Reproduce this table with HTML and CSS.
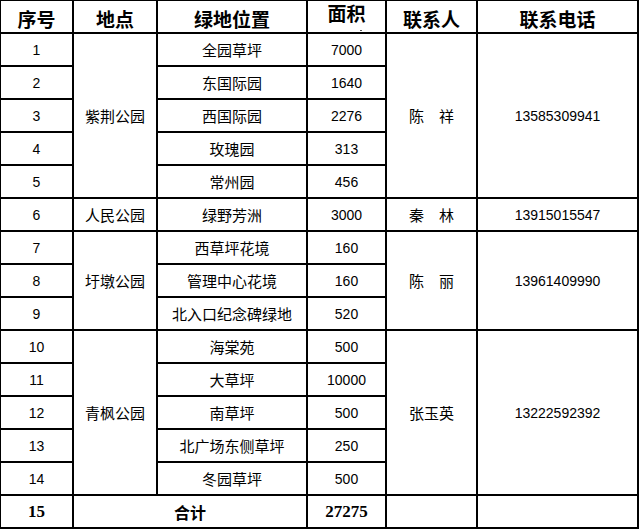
FILE: index.html
```html
<!DOCTYPE html>
<html lang="zh">
<head>
<meta charset="utf-8">
<title>绿地联系表</title>
<link rel="stylesheet" href="styles.css">
</head>
<body>
<table class="sheet">
  <colgroup>
    <col class="c1"><col class="c2"><col class="c3"><col class="c4"><col class="c5"><col class="c6">
  </colgroup>
  <thead>
    <tr class="head">
      <th>序号</th><th>地点</th><th>绿地位置</th><th class="area-h"><span class="area-t">面积</span><span class="dot"></span></th><th>联系人</th><th>联系电话</th>
    </tr>
  </thead>
  <tbody>
    <tr><td class="num">1</td><td rowspan="5">紫荆公园</td><td>全园草坪</td><td class="num">7000</td><td rowspan="5">陈　祥</td><td rowspan="5" class="num">13585309941</td></tr>
    <tr><td class="num">2</td><td>东国际园</td><td class="num">1640</td></tr>
    <tr><td class="num">3</td><td>西国际园</td><td class="num">2276</td></tr>
    <tr><td class="num">4</td><td>玫瑰园</td><td class="num">313</td></tr>
    <tr><td class="num">5</td><td>常州园</td><td class="num">456</td></tr>
    <tr><td class="num">6</td><td>人民公园</td><td>绿野芳洲</td><td class="num">3000</td><td>秦　林</td><td class="num">13915015547</td></tr>
    <tr><td class="num">7</td><td rowspan="3">圩墩公园</td><td>西草坪花境</td><td class="num">160</td><td rowspan="3">陈　丽</td><td rowspan="3" class="num">13961409990</td></tr>
    <tr><td class="num">8</td><td>管理中心花境</td><td class="num">160</td></tr>
    <tr><td class="num">9</td><td>北入口纪念碑绿地</td><td class="num">520</td></tr>
    <tr><td class="num">10</td><td rowspan="5">青枫公园</td><td>海棠苑</td><td class="num">500</td><td rowspan="5">张玉英</td><td rowspan="5" class="num">13222592392</td></tr>
    <tr><td class="num">11</td><td>大草坪</td><td class="num">10000</td></tr>
    <tr><td class="num">12</td><td>南草坪</td><td class="num">500</td></tr>
    <tr><td class="num">13</td><td>北广场东侧草坪</td><td class="num">250</td></tr>
    <tr><td class="num">14</td><td>冬园草坪</td><td class="num">500</td></tr>
    <tr class="total"><td class="tnum">15</td><td colspan="2" class="tlabel">合计</td><td class="tnum">27275</td><td></td><td></td></tr>
  </tbody>
</table>
</body>
</html>
```

FILE: styles.css
```css
html, body {
  margin: 0;
  padding: 0;
  background: #fff;
  overflow: hidden;
}

.sheet {
  border-collapse: collapse;
  table-layout: fixed;
  width: 640px;
  margin: -1px 0 0 -1px;
  font-family: "Noto Sans CJK SC", sans-serif;
  font-size: 15px;
  color: #000;
}

.c1 { width: 73px; }
.c2 { width: 84px; }
.c3 { width: 150px; }
.c4 { width: 79px; }
.c5 { width: 91px; }
.c6 { width: 161px; }

.sheet th,
.sheet td {
  border: 2px solid #000;
  padding: 0;
  text-align: center;
  vertical-align: middle;
  line-height: 1;
  white-space: nowrap;
}

.sheet tr {
  height: 33px;
}

.head th {
  font-size: 19px;
  font-weight: 700;
  padding-top: 3px;
}

.area-h {
  position: relative;
}

.area-t {
  position: relative;
  top: -6px;
}

.dot {
  position: absolute;
  left: 52px;
  bottom: 1px;
  width: 2px;
  height: 1px;
  background: #555;
}

.num {
  font-family: "Liberation Sans", "Noto Sans CJK SC", sans-serif;
  font-size: 14px;
}

.tnum {
  font-family: "Liberation Serif", serif;
  font-weight: 700;
  font-size: 17px;
}

.tlabel {
  font-weight: 700;
  font-size: 16px;
}
```
